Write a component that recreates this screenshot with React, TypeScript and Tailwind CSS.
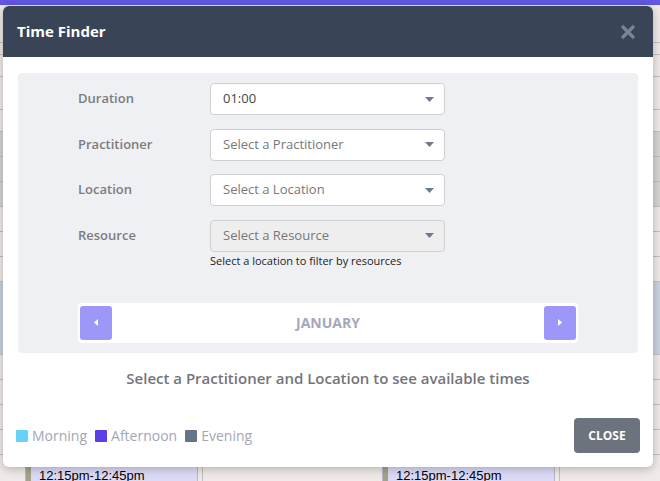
const font = { fontFamily: '"Open Sans", "Liberation Sans", sans-serif' };

function Caret() {
  return (
    <svg width="9" height="5" viewBox="0 0 9 5" className="shrink-0">
      <path d="M0 0h9L4.5 5z" fill="#6d7b8f" />
    </svg>
  );
}

function SelectBox({ value, placeholder, disabled }: { value?: string; placeholder?: string; disabled?: boolean }) {
  return (
    <div
      className={
        "flex h-[32px] w-[235px] items-center justify-between rounded-[4px] border border-[#d0d0d4] pl-[12px] pr-[10px] text-[13px] " +
        (disabled ? "bg-[#eeeeef]" : "bg-white")
      }
    >
      <span className={value ? "text-[#444]" : "text-[#777]"}>{value ?? placeholder}</span>
      <Caret />
    </div>
  );
}

function FormRow({ label, children }: { label: string; children: React.ReactNode }) {
  return (
    <div className="flex items-center">
      <div className="w-[132px] text-[13px] font-semibold text-[#7c7c80]">{label}</div>
      {children}
    </div>
  );
}

function Background() {
  const rows = [
    { h: 38, c: "bg-[#efe9e7]" },
    { h: 12, c: "bg-[#efe9e7]" },
    { h: 22, c: "bg-[#efe9e7]" },
    { h: 33, c: "bg-[#efe9e7]" },
    { h: 22, c: "bg-[#efe9e7]" },
    { h: 25, c: "bg-[#d6d3d3]" },
    { h: 25, c: "bg-[#d6d3d3]" },
    { h: 25, c: "bg-[#d6d3d3]" },
    { h: 25, c: "bg-[#efe9e7]" },
    { h: 25, c: "bg-[#efe9e7]" },
    { h: 25, c: "bg-[#efe9e7]" },
    { h: 73, c: "bg-[#c9d2e0]" },
    { h: 25, c: "bg-[#efe9e7]" },
    { h: 25, c: "bg-[#efe9e7]" },
    { h: 25, c: "bg-[#efe9e7]" },
    { h: 25, c: "bg-[#efe9e7]" },
    { h: 30, c: "bg-[#efe9e7]" },
  ];
  return (
    <div className="flex h-full flex-col">
      <div className="h-[5px] shrink-0 bg-[#6157e4]" />
      {rows.map((r, i) => (
        <div key={i} className={"shrink-0 border-b border-[#c4bfbf] " + r.c} style={{ height: r.h }} />
      ))}
    </div>
  );
}

function Chip() {
  return (
    <div className="flex h-[20px] w-[173px] border border-[#b9b5c4] bg-[#dcdaf7]">
      <div className="w-[5px] bg-[#a3a38d]" />
      <div className="pl-[8px] text-[13px] leading-[18px] text-black" style={{ fontFamily: '"Liberation Sans", sans-serif' }}>
        12:15pm-12:45pm
      </div>
    </div>
  );
}

export default function App() {
  return (
    <div className="relative h-[481px] w-[660px] overflow-hidden bg-[#efe9e7]" style={font}>
      <Background />
      <div className="absolute left-[25px] top-[466px] flex items-start">
        <Chip />
        <div className="ml-[4px] h-[20px] w-px bg-[#c4bfbf]" />
        <div className="ml-[179px]">
          <Chip />
        </div>
        <div className="ml-[4px] h-[20px] w-px bg-[#c4bfbf]" />
      </div>

      <div className="absolute left-[3px] top-[6px] flex h-[461px] w-[650px] flex-col overflow-hidden rounded-[6px] bg-white shadow-[0_2px_10px_rgba(0,0,0,0.25)]">
        <div className="flex h-[51px] shrink-0 items-center justify-between bg-[#394456] pl-[14px] pr-[17px]">
          <div className="text-[15px] font-bold text-white">Time Finder</div>
          <svg width="16" height="16" viewBox="0 0 16 16">
            <path d="M2 2L14 14M14 2L2 14" stroke="#7b8494" strokeWidth="3.2" />
          </svg>
        </div>

        <div className="flex flex-1 flex-col px-[15px] pt-[16px]">
          <div className="flex h-[280px] flex-col rounded-[4px] bg-[#eff0f4] pl-[60px] pt-[10px]">
            <div className="flex flex-col gap-[13.5px]">
              <FormRow label="Duration">
                <SelectBox value="01:00" />
              </FormRow>
              <FormRow label="Practitioner">
                <SelectBox placeholder="Select a Practitioner" />
              </FormRow>
              <FormRow label="Location">
                <SelectBox placeholder="Select a Location" />
              </FormRow>
              <div>
                <FormRow label="Resource">
                  <SelectBox placeholder="Select a Resource" disabled />
                </FormRow>
                <div className="ml-[132px] mt-px text-[11px] leading-[15px] text-[#222]">
                  Select a location to filter by resources
                </div>
              </div>
            </div>

            <div className="mt-[35px] flex h-[40px] w-[500px] items-center justify-between rounded-[4px] bg-white px-[2px]">
              <div className="flex h-[34px] w-[32px] items-center justify-center rounded-[3px] bg-[#9d98f8]">
                <svg width="4" height="7" viewBox="0 0 4 7">
                  <path d="M4 0v7L0 3.5z" fill="white" />
                </svg>
              </div>
              <div className="text-[14px] font-bold text-[#a4a8bc]">JANUARY</div>
              <div className="flex h-[34px] w-[32px] items-center justify-center rounded-[3px] bg-[#9d98f8]">
                <svg width="4" height="7" viewBox="0 0 4 7">
                  <path d="M0 0v7L4 3.5z" fill="white" />
                </svg>
              </div>
            </div>
          </div>

          <div className="mt-[14px] text-center text-[15px] font-semibold text-[#74747c]">
            Select a Practitioner and Location to see available times
          </div>

          <div className="mt-auto mb-[14px] flex items-center justify-between">
            <div className="-ml-[2px] flex items-center text-[14px] text-[#a3a6b5]">
              <span className="mr-[4px] h-[12px] w-[12px] rounded-[1px] bg-[#67d1fb]" />
              <span className="mr-[8px]">Morning</span>
              <span className="mr-[4px] h-[12px] w-[12px] rounded-[1px] bg-[#5a3ee6]" />
              <span className="mr-[8px]">Afternoon</span>
              <span className="mr-[4px] h-[12px] w-[12px] rounded-[1px] bg-[#667489]" />
              <span>Evening</span>
            </div>
            <div className="-mr-[2px] flex h-[35px] w-[66px] items-center justify-center rounded-[4px] bg-[#6c737c] text-[12px] font-bold text-white">
              CLOSE
            </div>
          </div>
        </div>
      </div>
    </div>
  );
}
